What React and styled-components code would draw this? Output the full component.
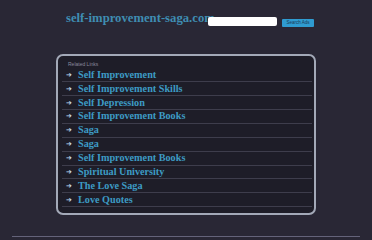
import React from "react";
import styled, { createGlobalStyle } from "styled-components";

const Global = createGlobalStyle`
  html, body { margin: 0; padding: 0; background: #292735; }
  body { width: 372px; height: 240px; overflow: hidden; }
`;

const Page = styled.div`
  width: 372px;
  height: 240px;
  display: flex;
  flex-direction: column;
  background: #292735;
`;

const Header = styled.div`
  display: flex;
  align-items: flex-start;
  padding-left: 66px;
  height: 54px;
`;

const Title = styled.div`
  width: 142px;
  margin-top: 10px;
  font-family: "Liberation Serif", serif;
  font-weight: bold;
  font-size: 12.7px;
  line-height: 16px;
  color: #3f8db2;
  white-space: nowrap;
`;

const SearchInput = styled.div`
  position: relative;
  z-index: 1;
  width: 69px;
  height: 9px;
  margin-top: 17px;
  background: #ffffff;
  border-radius: 2px;
`;

const SearchButton = styled.div`
  margin-left: 5px;
  margin-top: 18.5px;
  width: 32px;
  height: 8px;
  background: #2f9bd0;
  border-radius: 1px;
  font-family: "Liberation Sans", sans-serif;
  font-size: 4.5px;
  line-height: 8px;
  text-align: center;
  color: #1b3a55;
`;

const Box = styled.div`
  margin-left: 56px;
  width: 250px;
  height: 157px;
  border: 2px solid #a3a9b8;
  border-radius: 7px;
  background: #1e1d28;
  padding: 0 2px 0 4px;
  box-sizing: content-box;
  display: flex;
  flex-direction: column;
`;

const Label = styled.div`
  height: 12.3px;
  padding-left: 6px;
  padding-top: 6px;
  box-sizing: border-box;
  font-family: "Liberation Sans", sans-serif;
  font-size: 5px;
  line-height: 5px;
  color: #8a8a9c;
`;

const Row = styled.div`
  height: 12.9px;
  border-bottom: 1px solid #3e3d4c;
  display: flex;
  align-items: center;
  padding-left: 4px;
`;

const Arrow = styled.span`
  width: 12px;
  font-family: "DejaVu Sans", sans-serif;
  font-weight: bold;
  font-size: 7px;
  color: #c3dcec;
`;

const LinkText = styled.span`
  font-family: "Liberation Serif", serif;
  font-weight: bold;
  font-size: 10.2px;
  line-height: 12px;
  color: #3d9bc4;
  white-space: nowrap;
`;

const Footer = styled.div`
  margin: 21px 12px 0 12px;
  height: 1px;
  background: #64637a;
`;

const links = [
  "Self Improvement",
  "Self Improvement Skills",
  "Self Depression",
  "Self Improvement Books",
  "Saga",
  "Saga",
  "Self Improvement Books",
  "Spiritual University",
  "The Love Saga",
  "Love Quotes",
];

export default function App() {
  return (
    <Page>
      <Global />
      <Header>
        <Title>self-improvement-saga.com</Title>
        <SearchInput />
        <SearchButton>Search Ads</SearchButton>
      </Header>
      <Box>
        <Label>Related Links</Label>
        {links.map((l, i) => (
          <Row key={i}>
            <Arrow>➔</Arrow>
            <LinkText>{l}</LinkText>
          </Row>
        ))}
      </Box>
      <Footer />
    </Page>
  );
}
